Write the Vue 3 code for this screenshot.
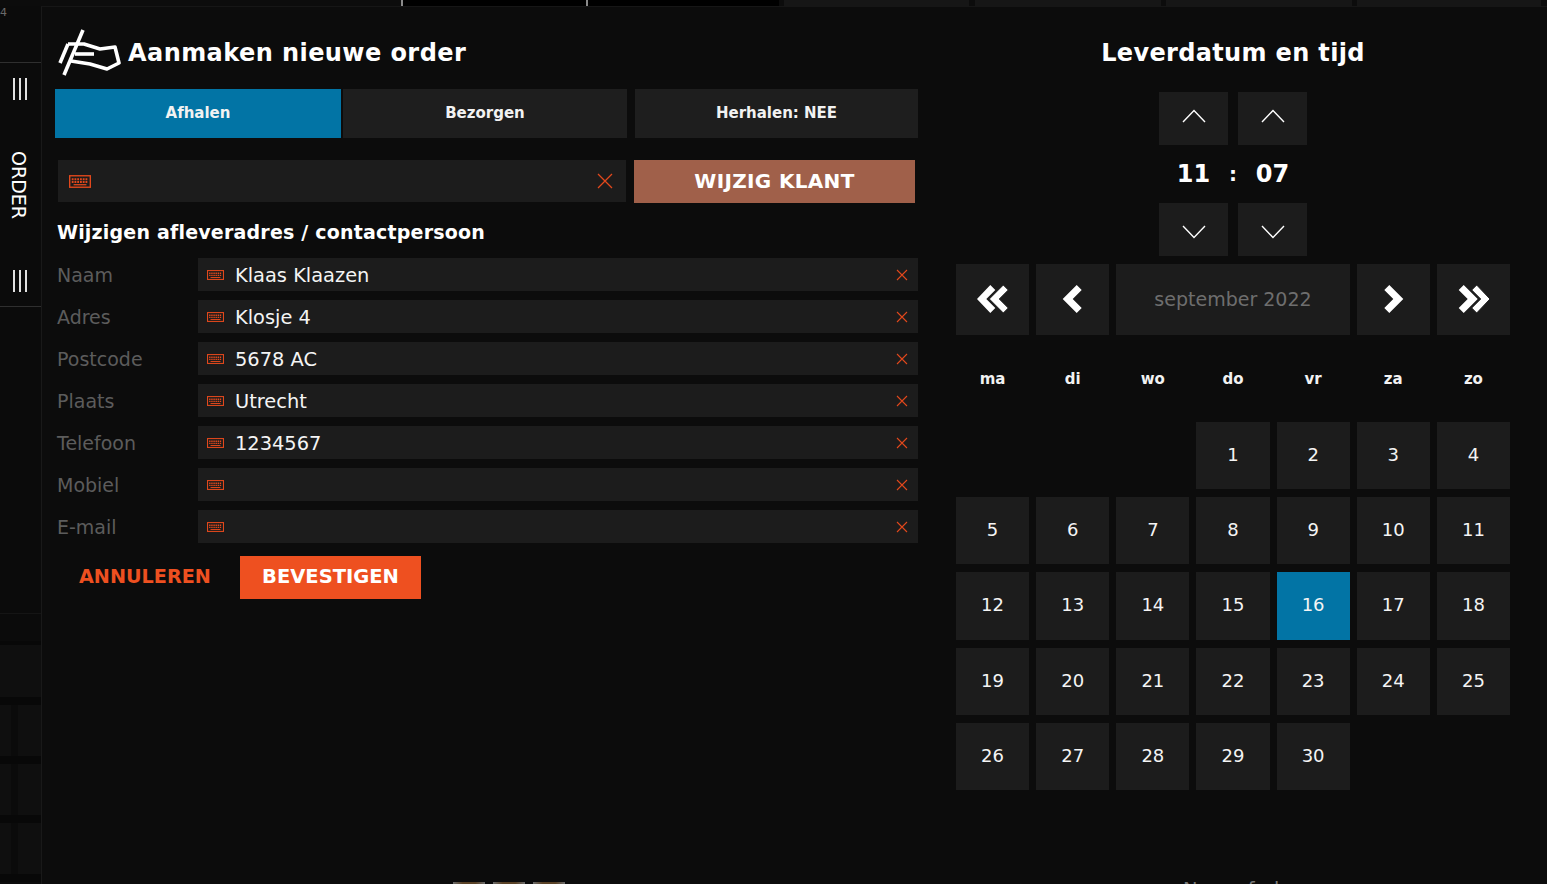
<script setup>
const fields = [
  { label: 'Naam', value: 'Klaas Klaazen' },
  { label: 'Adres', value: 'Klosje 4' },
  { label: 'Postcode', value: '5678 AC' },
  { label: 'Plaats', value: 'Utrecht' },
  { label: 'Telefoon', value: '1234567' },
  { label: 'Mobiel', value: '' },
  { label: 'E-mail', value: '' }
]
const weekdays = ['ma', 'di', 'wo', 'do', 'vr', 'za', 'zo']
const days = Array.from({ length: 30 }, (_, i) => i + 1)
const topSegments = ['seg-a', 'seg-b1', 'seg-b2', 'seg-c1', 'seg-c2', 'seg-c3', 'seg-c4']
</script>

<template>
  <div class="page">
    <div class="top-strip">
      <span v-for="(s, i) in topSegments" :key="i" :class="['seg', s]"></span>
    </div>
    <div class="body">
      <aside class="side">
        <div class="side-num">4</div>
        <div class="side-main">
          <div class="bars"><i></i><i></i><i></i></div>
          <div class="side-label">ORDER</div>
          <div class="bars"><i></i><i></i><i></i></div>
        </div>
        <div class="side-tiles">
          <div class="tile-wide short"></div>
          <div class="tile-wide tall"></div>
          <div class="tile-row"><span></span><span></span></div>
          <div class="tile-row"><span></span><span></span></div>
          <div class="tile-row"><span></span><span></span></div>
        </div>
      </aside>

      <main class="modal">
        <section class="left">
          <header class="title-row">
            <svg class="logo" viewBox="0 0 64 50" width="64" height="50" fill="none" stroke="#fff" stroke-width="3.6">
              <path d="M26 1 L7 46" />
              <path d="M11 15 L3 34" />
              <path d="M11 15 H27 L43 20 L58 18 L62 34 L50 40 L33 35 L14 32" stroke-linejoin="round" />
              <path d="M18 25 H37" />
            </svg>
            <h1>Aanmaken nieuwe order</h1>
          </header>

          <div class="tabs">
            <button class="tab active">Afhalen</button>
            <button class="tab">Bezorgen</button>
            <button class="tab">Herhalen: NEE</button>
          </div>

          <div class="client-row">
            <div class="client-input">
              <svg class="kb kb-big" viewBox="0 0 24 14" fill="none" stroke="#e2481c">
                <rect x="0.75" y="0.75" width="22.5" height="12.5" stroke-width="1.5" />
                <path d="M3 4.5H21M3 7.5H21" stroke-width="2" stroke-dasharray="2 1" />
                <path d="M5 10.5H19" stroke-width="1.4" />
              </svg>
              <svg class="cross cross-big" viewBox="0 0 16 16" stroke="#e2481c" stroke-width="1.3"><path d="M1 1L15 15M15 1L1 15" /></svg>
            </div>
            <button class="change">WIJZIG KLANT</button>
          </div>

          <h2>Wijzigen afleveradres / contactpersoon</h2>

          <div class="fields">
            <div v-for="f in fields" :key="f.label" class="field">
              <label>{{ f.label }}</label>
              <div class="input">
                <svg class="kb" viewBox="0 0 24 14" fill="none" stroke="#e2481c">
                  <rect x="0.75" y="0.75" width="22.5" height="12.5" stroke-width="1.5" />
                  <path d="M3 4.5H21M3 7.5H21" stroke-width="2" stroke-dasharray="2 1" />
                  <path d="M5 10.5H19" stroke-width="1.4" />
                </svg>
                <span class="value">{{ f.value }}</span>
                <svg class="cross" viewBox="0 0 12 12" stroke="#e2481c" stroke-width="1.1"><path d="M1 1L11 11M11 1L1 11" /></svg>
              </div>
            </div>
          </div>

          <div class="actions">
            <button class="cancel">ANNULEREN</button>
            <button class="confirm">BEVESTIGEN</button>
          </div>
        </section>

        <section class="right">
          <h1 class="right-title">Leverdatum en tijd</h1>
          <div class="spin-row first">
            <button class="spin"><svg class="up" viewBox="0 0 24 14" width="24" height="14" fill="none" stroke="#fff" stroke-width="1.4"><path d="M1 13L12 1.5L23 13" /></svg></button>
            <button class="spin"><svg class="up" viewBox="0 0 24 14" width="24" height="14" fill="none" stroke="#fff" stroke-width="1.4"><path d="M1 13L12 1.5L23 13" /></svg></button>
          </div>
          <div class="time"><span>11</span><em>:</em><span>07</span></div>
          <div class="spin-row">
            <button class="spin"><svg class="down" viewBox="0 0 24 14" width="24" height="14" fill="none" stroke="#fff" stroke-width="1.4"><path d="M1 1L12 12.5L23 1" /></svg></button>
            <button class="spin"><svg class="down" viewBox="0 0 24 14" width="24" height="14" fill="none" stroke="#fff" stroke-width="1.4"><path d="M1 1L12 12.5L23 1" /></svg></button>
          </div>

          <div class="cal-nav">
            <button class="cell">
              <svg class="arrow" viewBox="0 0 32 28" width="32" height="28" fill="#fff"><path d="M13.3 0L18.3 5L9.3 14L18.3 23L13.3 28L0 14Z" /><path d="M26.3 0L31.3 5L22.3 14L31.3 23L26.3 28L12.3 14Z" stroke="#1c1c1c" stroke-width="1" /></svg>
            </button>
            <button class="cell">
              <svg class="arrow shift-l" viewBox="0 0 20 28" width="20" height="28" fill="#fff"><path d="M14.7 0L19.7 5L10.7 14L19.7 23L14.7 28L0.7 14Z" /></svg>
            </button>
            <div class="cell month">september 2022</div>
            <button class="cell">
              <svg class="arrow" viewBox="0 0 20 28" width="20" height="28" fill="#fff"><path d="M5.3 0L0.3 5L9.3 14L0.3 23L5.3 28L19.3 14Z" /></svg>
            </button>
            <button class="cell">
              <svg class="arrow" viewBox="0 0 32 28" width="32" height="28" fill="#fff"><path d="M5.7 0L0.7 5L9.7 14L0.7 23L5.7 28L19.7 14Z" /><path d="M18.7 0L13.7 5L22.7 14L13.7 23L18.7 28L32 14Z" stroke="#1c1c1c" stroke-width="1" /></svg>
            </button>
          </div>

          <div class="weekdays">
            <span v-for="d in weekdays" :key="d">{{ d }}</span>
          </div>

          <div class="days">
            <button
              v-for="d in days"
              :key="d"
              :class="['cell', 'day', { first: d === 1, today: d === 16 }]"
            >{{ d }}</button>
          </div>
        </section>
      </main>
    </div>

    <div class="peek">
      <span class="thumb"></span><span class="thumb"></span><span class="thumb"></span>
      <span class="peek-x">✕</span>
      <span class="peek-text">Naar afrekenen</span>
    </div>
  </div>
</template>

<style>
html, body { margin: 0; background: #0a0a0a; }
</style>

<style scoped>
.page {
  position: relative;
  width: 1547px;
  height: 884px;
  overflow: hidden;
  background: #0c0c0c;
  display: flex;
  flex-direction: column;
  font-family: "DejaVu Sans", sans-serif;
  color: #fff;
}
button {
  font-family: inherit;
  border: 0;
  padding: 0;
  color: inherit;
  cursor: pointer;
}
h1, h2 { margin: 0; }

.top-strip { display: flex; height: 6px; flex: none; }
.seg { height: 6px; }
.seg-a { width: 401px; background: #0c0c0c; border-right: 2px solid #8a8a8a; }
.seg-b1 { width: 183px; background: #000; border-right: 2px solid #8a8a8a; }
.seg-b2 { width: 191px; background: #000; }
.seg-c1 { width: 185px; margin-left: 5px; background: #161616; }
.seg-c2 { width: 186px; margin-left: 6px; background: #161616; }
.seg-c3 { width: 186px; margin-left: 5px; background: #161616; }
.seg-c4 { width: 184px; margin-left: 5px; background: #161616; }

.body { flex: 1; display: flex; min-height: 0; }

.side { width: 41px; flex: none; display: flex; flex-direction: column; background: #0b0b0b; }
.side-num {
  height: 57px;
  box-sizing: border-box;
  padding-top: 1px;
  font-size: 11px;
  line-height: 12px;
  color: #6a6a6a;
  border-bottom: 1px solid #2f2f2f;
}
.side-main {
  height: 244px;
  box-sizing: border-box;
  padding: 15px 1px 0 0;
  display: flex;
  flex-direction: column;
  align-items: center;
  border-bottom: 1px solid #2f2f2f;
}
.bars { display: flex; gap: 4px; height: 22px; flex: none; }
.bars i { width: 2px; background: #e2e2e2; display: block; }
.side-label {
  writing-mode: vertical-rl;
  font-size: 19px;
  line-height: 20px;
  margin: 51px 2px 51px 0;
  color: #fff;
  height: 68px;
}
.side-tiles { margin-top: 306px; display: flex; flex-direction: column; }
.tile-wide.short { height: 27px; background: #0b0b0b; border-top: 1px solid #151515; }
.tile-wide.tall { height: 52px; background: #0f0f0f; border-top: 4px solid #080808; border-bottom: 8px solid #080808; }
.tile-row { display: flex; gap: 7px; height: 51px; border-bottom: 8px solid #080808; }
.tile-row span { flex: 1; background: #0f0f0f; }
.tile-row span:first-child { flex: none; width: 11px; }

.modal {
  flex: 1;
  display: flex;
  box-sizing: border-box;
  background: #0c0c0c;
  border-left: 1px solid #191919;
  border-top: 1px solid #161616;
  padding-left: 13px;
}
.left { width: 863px; flex: none; }
.title-row {
  display: flex;
  align-items: center;
  height: 82px;
  margin-left: 2px;
}
.logo { margin-top: 12px; flex: none; }
.title-row h1 {
  font-size: 24px;
  font-weight: 700;
  letter-spacing: 0.43px;
  margin-left: 7px;
  white-space: nowrap;
  margin-top: 9px;
}
.tabs { display: flex; height: 49px; }
.tab {
  background: #1e1e1e;
  font-weight: 700;
  font-size: 15px;
  color: #f2f2f2;
  width: 284px;
  margin-left: 8px;
  padding-bottom: 2px;
}
.tab:first-child { margin-left: 0; width: 286px; }
.tab:nth-child(2) { margin-left: 2px; }
.tab:last-child { width: 283px; }
.tab.active { background: #0274a5; }

.client-row { display: flex; margin: 22px 0 0 3px; height: 43px; }
.client-input {
  width: 568px;
  height: 42px;
  background: #1c1c1c;
  display: flex;
  align-items: center;
  justify-content: space-between;
  padding: 0 13px 0 11px;
  box-sizing: border-box;
}
.kb { width: 17px; height: 10px; flex: none; }
.kb-big { width: 22px; height: 13px; }
.cross { width: 12px; height: 12px; flex: none; margin-left: auto; }
.cross-big { width: 16px; height: 16px; }
.change {
  width: 281px;
  margin-left: 8px;
  background: #a0604a;
  font-size: 20px;
  font-weight: 700;
  letter-spacing: 0.33px;
  padding-bottom: 2px;
}
h2 {
  margin: 16px 0 0 2px;
  height: 26px;
  font-size: 19px;
  line-height: 26px;
  font-weight: 700;
  letter-spacing: 0.2px;
}
.fields { margin-top: 13px; display: flex; flex-direction: column; gap: 9px; }
.field { display: flex; height: 33px; align-items: center; }
.field label {
  width: 143px;
  padding-left: 2px;
  box-sizing: border-box;
  font-size: 19px;
  color: #5c5c5c;
}
.input {
  flex: 1;
  height: 33px;
  background: #1c1c1c;
  display: flex;
  align-items: center;
  padding: 0 10px 0 9px;
  box-sizing: border-box;
}
.value { margin-left: 11px; padding-top: 1px; font-size: 19.4px; color: #f4f4f4; }
.actions { display: flex; align-items: center; margin: 13px 0 0 24px; height: 43px; }
.cancel {
  background: none;
  color: #ee5020;
  font-size: 19.2px;
  font-weight: 700;
  width: 161px;
  text-align: left;
  padding-bottom: 2px;
}
.confirm {
  background: #ee5020;
  width: 181px;
  height: 43px;
  font-size: 19.5px;
  font-weight: 700;
  padding-bottom: 2px;
}

.right { width: 554px; margin-left: 38px; flex: none; display: flex; flex-direction: column; }
.right-title {
  height: 85px;
  box-sizing: border-box;
  text-align: center;
  font-size: 24px;
  font-weight: 700;
  letter-spacing: 0.35px;
  padding-top: 32px;
  white-space: nowrap;
}
.spin-row { display: flex; justify-content: center; gap: 10px; height: 53px; }
.spin {
  width: 69px;
  background: #1c1c1c;
  display: flex;
  align-items: center;
  justify-content: center;
}
.up { margin-bottom: 5px; }
.down { margin-top: 4px; }
.time {
  height: 58px;
  display: grid;
  grid-template-columns: 69px 10px 69px;
  justify-content: center;
  align-items: center;
  justify-items: center;
  font-size: 24px;
  font-weight: 700;
}
.time em { font-style: normal; font-size: 20px; }
.cal-nav {
  margin-top: 8px;
  display: grid;
  grid-template-columns: repeat(2, 73px) 234px repeat(2, 73px);
  gap: 7px;
  height: 71px;
}
.cell {
  background: #1c1c1c;
  display: flex;
  align-items: center;
  justify-content: center;
  color: #f4f4f4;
  font-size: 18px;
}
.arrow { margin-bottom: 1px; }
.shift-l { margin-right: 1px; }
.month { font-size: 19px; color: #6e6e6e; padding-bottom: 2px; }
.weekdays {
  height: 87px;
  display: grid;
  grid-template-columns: repeat(7, 1fr);
  gap: 7px;
  align-items: center;
  justify-items: center;
  font-weight: 700;
  font-size: 15px;
  color: #f2f2f2;
}
.days {
  display: grid;
  grid-template-columns: repeat(7, 1fr);
  column-gap: 7px;
  row-gap: 8px;
  grid-auto-rows: 67.2px;
}
.day { padding-bottom: 2px; }
.day.first { grid-column-start: 4; }
.day.today { background: #0274a5; }

.peek { position: absolute; left: 0; right: 0; bottom: 0; height: 3px; overflow: hidden; }
.thumb { position: absolute; top: 1px; width: 32px; height: 2px; background: linear-gradient(90deg, #6a6a6a, #5a4226 30%, #5a4226 70%, #6a6a6a); }
.thumb:nth-child(1) { left: 453px; }
.thumb:nth-child(2) { left: 493px; }
.thumb:nth-child(3) { left: 533px; }
.peek-x { position: absolute; left: 1008px; top: -1px; font-size: 20px; line-height: 20px; color: #777; }
.peek-text { position: absolute; left: 1183px; top: -1px; font-size: 19.5px; line-height: 20px; color: #777; }
</style>
